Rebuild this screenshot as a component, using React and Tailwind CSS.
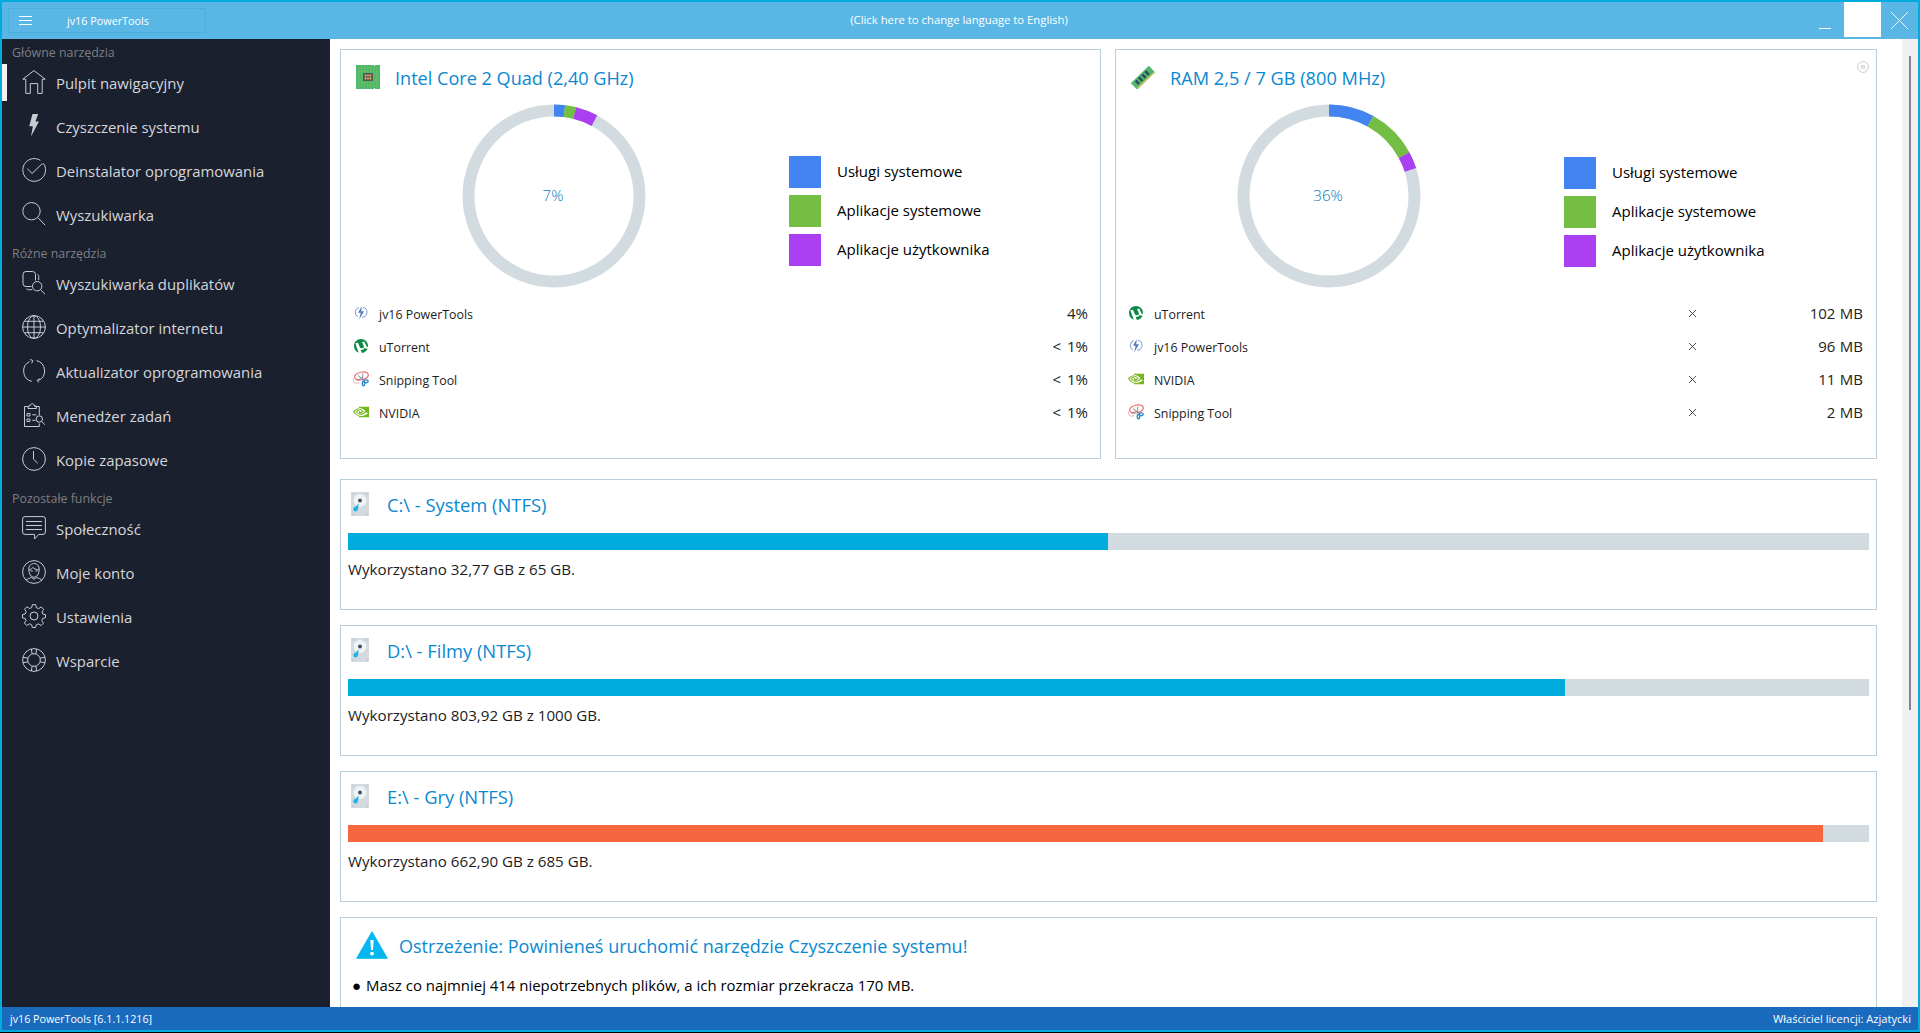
import React from 'react';
import { SiNvidia, SiUtorrent } from 'react-icons/si';

const COLORS = {
  system: '#4285F1',
  systemApps: '#74BF43',
  userApps: '#A93FF0',
};

// Sidebar icons, all drawn on a 24x24 grid
const icons = {
  home: <path d="M.8 9.2 12 .6l11.2 8.600h-3v14.200h-4.500V13.600H8.300v9.800H3.800V9.200z" />,
  bolt: <path fill="currentColor" stroke="none" d="M10.500 0h5.600l-2.600 7.600h3.500L9 22.500l1.900-10.200H7.200z" />,
  check: (
    <>
      <path d="M18.300 2.300A11.400 11.400 0 1 0 22.900 8" />
      <path d="m5.300 10.800 4.800 4.600L19.200 6.600c1.500-1.300 3.300-1 3.700 1.400" />
    </>
  ),
  search: (
    <>
      <circle cx="9.500" cy="9.200" r="8.700" />
      <path d="m15.800 15.500 7.400 7.700" />
    </>
  ),
  duplicates: (
    <>
      <path d="M9.500 15.500H4a3 3 0 0 1-3-3v-9a3 3 0 0 1 3-3h6.500a3 3 0 0 1 3 3v6" />
      <path d="M15.500 3.500c1 .2 1.200 1 1.200 2v3.500M4.500 17.500c.3 1.200 1 1.200 2 1.200h3.800" />
      <circle cx="15.200" cy="15.200" r="4.700" />
      <path d="m18.600 18.800 4.400 4.400" />
    </>
  ),
  globe: (
    <>
      <circle cx="12" cy="12" r="11.400" />
      <ellipse cx="12" cy="12" rx="6.500" ry="11.400" />
      <path d="M12 .5v23M.6 12h22.800M2.600 6.300h18.800M2.600 17.700h18.800" />
    </>
  ),
  refresh: (
    <>
      <path d="M14.500 1.600a10.600 10.600 0 0 1 2 19.900" />
      <path d="M9.800 22.400A10.600 10.600 0 0 1 7.500 2.600" />
      <path d="M8 .5 10.800 1.500 9.700 4.300M16.700 23.500l-1.500-2.200 2.600-1.500" />
    </>
  ),
  tasks: (
    <>
      <path d="M5.500 3.500H2.500v20h14.800v-3M12.500 3.500h4.800v8.500" />
      <path d="M6 5.500V3h2c.2-3 4.200-3 4.400 0h2v2.500zM5 10.500h3v2.500H5zM5 16h3v2.500H5zM10.300 11.800h4M10.300 17.300h3.200" />
      <circle cx="17.300" cy="16" r="3.200" />
      <path d="m19.700 18.500 3.200 3.200" />
    </>
  ),
  clock: (
    <>
      <circle cx="12" cy="12" r="11.400" />
      <path d="M11.500 4v8.200l4.200 4" />
    </>
  ),
  chat: (
    <>
      <path d="M3 .6h18A2.400 2.400 0 0 1 23.400 3v13a2.400 2.400 0 0 1-2.400 2.400h-4.200L12.600 23v-4.600H3A2.400 2.400 0 0 1 .6 16V3A2.400 2.400 0 0 1 3 .6z" />
      <path d="M4 5.500h16M4 9.500h16M4 13.500h16" />
    </>
  ),
  account: (
    <>
      <circle cx="12" cy="12" r="11.400" />
      <path d="M6.800 9.500C6.500 1.500 17.600 1.500 17.200 9.500c-.1 4.500-2.200 7.700-5.200 7.700s-5.100-3.200-5.200-7.700z" />
      <path d="M6.900 9.800c2-.2 3-1 3.800-2.300 1.800 1.500 4 2.200 6.400 2.300M8.500 11h2.300M13.300 11h2.300M4 20.300c1.300-1.600 3.500-2 5.500-2.900l2.500 2 2.500-2c2 .9 4.200 1.300 5.500 2.900" />
    </>
  ),
  gear: (
    <>
      <circle cx="12" cy="12" r="4" />
      <path d="M10.300 .7h3.400l.7 3 2.200.9 2.700-1.700 2.300 2.400-1.600 2.700.8 2.100 2.700.5v3.100l-2.800.7-.9 2.200 1.600 2.600-2.300 2.300-2.700-1.600-2.100.9-.7 2.700h-3.200l-.8-2.800-2.200-.9-2.600 1.700-2.400-2.400L4 16.600l-.8-2.100-2.700-.6v-3.300l2.800-.7.9-2.200-1.600-2.600 2.300-2.300 2.600 1.700 2.200-.9z" strokeLinejoin="round" />
    </>
  ),
  lifebuoy: (
    <>
      <circle cx="12" cy="12" r="11.400" />
      <circle cx="12" cy="12" r="6.300" />
      <path d="M9.300 1l.9 5M14.700 1l-.9 5M9.300 23l.9-5M14.700 23l-.9-5M1 9.300l5 .9M1 14.700l5-.9M23 9.300l-5 .9M23 14.700l-5-.9" />
    </>
  ),
};

const menu = [
  {
    title: 'Główne narzędzia',
    items: [
      { icon: 'home', label: 'Pulpit nawigacyjny', active: true },
      { icon: 'bolt', label: 'Czyszczenie systemu' },
      { icon: 'check', label: 'Deinstalator oprogramowania' },
      { icon: 'search', label: 'Wyszukiwarka' },
    ],
  },
  {
    title: 'Różne narzędzia',
    items: [
      { icon: 'duplicates', label: 'Wyszukiwarka duplikatów' },
      { icon: 'globe', label: 'Optymalizator internetu' },
      { icon: 'refresh', label: 'Aktualizator oprogramowania' },
      { icon: 'tasks', label: 'Menedżer zadań' },
      { icon: 'clock', label: 'Kopie zapasowe' },
    ],
  },
  {
    title: 'Pozostałe funkcje',
    items: [
      { icon: 'chat', label: 'Społeczność' },
      { icon: 'account', label: 'Moje konto' },
      { icon: 'gear', label: 'Ustawienia' },
      { icon: 'lifebuoy', label: 'Wsparcie' },
    ],
  },
];

const cpuApps = [
  { app: 'jv16', name: 'jv16 PowerTools', value: '4%' },
  { app: 'utorrent', name: 'uTorrent', value: '< 1%' },
  { app: 'snipping', name: 'Snipping Tool', value: '< 1%' },
  { app: 'nvidia', name: 'NVIDIA', value: '< 1%' },
];

const ramApps = [
  { app: 'utorrent', name: 'uTorrent', value: '102 MB' },
  { app: 'jv16', name: 'jv16 PowerTools', value: '96 MB' },
  { app: 'nvidia', name: 'NVIDIA', value: '11 MB' },
  { app: 'snipping', name: 'Snipping Tool', value: '2 MB' },
];

const disks = [
  { name: 'C:\\ - System (NTFS)', usage: 'Wykorzystano 32,77 GB z 65 GB.', percent: 49.95, bar: 'bg-[#00ABDE]' },
  { name: 'D:\\ - Filmy (NTFS)', usage: 'Wykorzystano 803,92 GB z 1000 GB.', percent: 80, bar: 'bg-[#00ABDE]' },
  { name: 'E:\\ - Gry (NTFS)', usage: 'Wykorzystano 662,90 GB z 685 GB.', percent: 97, bar: 'bg-[#F6663F]' },
];

function AppIcon({ app }) {
  if (app === 'utorrent') return <SiUtorrent className="w-3.5 h-3.5 text-[#0A8A45]" />;
  if (app === 'nvidia') return <SiNvidia className="w-4 h-4 text-[#76B51B]" />;
  if (app === 'jv16') {
    return (
      <svg className="w-3.5 h-3.5" viewBox="0 0 14 14" fill="none" stroke="#7F9AD0">
        <path d="M5 1.500a5 5 0 0 0-1 9.300M9 1.300a5 5 0 0 1-1 9.900" />
        <path d="M7.800 0 4 6.800h2.700L5.200 13.500 10 5.300H7.200z" fill="#5478C0" stroke="none" />
      </svg>
    );
  }
  return (
    <svg className="w-4 h-4" viewBox="0 0 16 16" fill="none">
      <ellipse cx="8.500" cy="5" rx="7" ry="3.900" stroke="#F07070" strokeWidth="1.200" transform="rotate(-14 8.500 5)" />
      <path d="M1.500 6.500C-.5 9 .5 12 3.500 12.300L6 11.500" stroke="#F3A5A0" />
      <path d="m5 4.500 6 4.500M9.800 2.500 9.500 9M3.500 9l5-1.500" stroke="#7b818c" strokeWidth=".9" />
      <ellipse cx="10.500" cy="12.500" rx="1.200" ry="2.300" stroke="#2E8BC9" strokeWidth="1.400" />
      <ellipse cx="13.200" cy="10.300" rx="2" ry="1.400" stroke="#2E8BC9" strokeWidth="1.400" />
    </svg>
  );
}

function CpuIcon() {
  return (
    <svg className="w-6 h-6" viewBox="0 0 24 24">
      <path d="M0 0h18v1h1V0h5v24h-5v-1h-1v1H0z" fill="#4DB96C" />
      <path
        d="M2.500 2v20M5.500 2v20M8.500 2v20M11.500 2v20M14.500 2v20M17.500 2v20M21 2v20M2 3h20M2 6h20M2 9h20M2 12h20M2 15h20M2 18h20M2 21h20"
        stroke="#8CBD5C"
        strokeWidth=".7"
        strokeDasharray="1.500 1.500"
      />
      <rect x="7" y="8" width="10" height="8" fill="#5C5550" />
      <path d="M9.500 9v6M12 9v6M14.500 9v6M8.500 10.500h7M8.500 13.500h7" stroke="#C8A068" strokeWidth=".9" />
    </svg>
  );
}

function RamIcon() {
  return (
    <svg className="w-6 h-6" viewBox="0 0 24 24">
      <g transform="rotate(-44 12 12)">
        <rect x="-1" y="8" width="25" height="9" fill="#4DB96C" />
        <rect x="0" y="15.500" width="23" height="1.500" fill="#C9C25A" />
        <path d="M3 9.500h2.500v5H3zM7.500 9.500H10v5H7.500zM12 9.500h2.500v5H12zM16.500 9.500H19v5h-2.500z" fill="#34495E" />
      </g>
    </svg>
  );
}

function DiskIcon() {
  return (
    <svg className="w-[18px] h-6" viewBox="0 0 18 24">
      <rect width="18" height="24" fill="#D2DADF" />
      <g fill="#B5C0C7">
        <circle cx="1.800" cy="1.800" r=".8" />
        <circle cx="16.200" cy="1.800" r=".8" />
        <circle cx="1.800" cy="22.200" r=".8" />
        <circle cx="16.200" cy="22.200" r=".8" />
      </g>
      <circle cx="9" cy="8.500" r="6.500" fill="#F0F2F3" />
      <circle cx="9" cy="8.500" r="1.900" fill="#3E4F60" />
      <path d="M7.800 11.500 6.800 17.500c-.5 2.600-4.300 2.400-4.500 0 0-1.300.8-2.200 2-2.500z" fill="#12B5EA" />
      <circle cx="4.600" cy="17.300" r=".7" fill="#7A99A8" />
    </svg>
  );
}

function Donut({ percent, segments }) {
  const r = 85.5;
  const point = (deg) => {
    const a = ((deg - 90) * Math.PI) / 180;
    return `${92 + r * Math.cos(a)} ${92 + r * Math.sin(a)}`;
  };

  return (
    <div className="relative w-[184px] h-[184px] shrink-0">
      <svg className="w-full h-full" viewBox="0 0 184 184" fill="none" strokeWidth="12">
        <circle cx="92" cy="92" r={r} stroke="#D2DBE0" />
        {segments.map((s) => (
          <path key={s.color} d={`M${point(s.from)}A${r} ${r} 0 0 1 ${point(s.to)}`} stroke={s.color} />
        ))}
      </svg>
      <span className="absolute inset-0 flex items-center justify-center pr-[2px] pb-[2px] text-[15.100px] font-light text-[#0A7DB8]">
        {percent}
      </span>
    </div>
  );
}

function Legend() {
  return (
    <ul className="flex flex-col gap-[7px] ml-[143px] text-[15px] text-black">
      <li className="flex items-center gap-4">
        <span className="w-8 h-8 bg-[#4285F1]" />
        <span className="pb-0.5">Usługi systemowe</span>
      </li>
      <li className="flex items-center gap-4">
        <span className="w-8 h-8 bg-[#74BF43]" />
        <span className="pb-0.5">Aplikacje systemowe</span>
      </li>
      <li className="flex items-center gap-4">
        <span className="w-8 h-8 bg-[#A93FF0]" />
        <span className="pb-0.5">Aplikacje użytkownika</span>
      </li>
    </ul>
  );
}

function AppRow({ row, closable }) {
  return (
    <li className="flex items-center h-[33px]">
      <span className="w-4 mr-[10px] mb-[2px] flex justify-center">
        <AppIcon app={row.app} />
      </span>
      <span className="pt-[3px] text-[12.400px] text-[#1c1c1c]">{row.name}</span>
      {closable && (
        <svg className="w-[7px] h-[7px] ml-auto mr-[43px] mb-px" viewBox="0 0 7 7" stroke="#333a45" strokeWidth=".9">
          <path d="M0 0l7 7M7 0 0 7" />
        </svg>
      )}
      <span className={`text-[15px] text-[#222] text-right ${closable ? 'w-[124px] [word-spacing:.5px]' : 'ml-auto [word-spacing:2px]'}`}>
        {row.value}
      </span>
    </li>
  );
}

function Sidebar() {
  return (
    <nav className="w-[328px] shrink-0 bg-[#1B202E]">
      {menu.map((group, i) => (
        <div key={group.title}>
          <h3 className={`flex items-end pl-[10px] text-[12.400px] leading-4 text-[#7D7F82] ${i === 0 ? 'h-[22px]' : 'h-[25px]'}`}>
            {group.title}
          </h3>
          {group.items.map((item) => (
            <a key={item.label} className="relative flex items-center h-11 pl-5 text-[#C9CCD3]">
              {item.active && <span className="absolute left-0 top-[3px] w-[5px] h-[37px] bg-[#F2F2F2]" />}
              <svg className="w-6 h-6 mb-[2px]" viewBox="0 0 24 24" fill="none" stroke="currentColor" strokeWidth="1">
                {icons[item.icon]}
              </svg>
              <span className="ml-[10px] text-[14.900px] text-[#D5D6DA]">{item.label}</span>
            </a>
          ))}
        </div>
      ))}
    </nav>
  );
}

export default function App() {
  return (
    <div className="w-[1920px] h-[1033px] bg-black overflow-hidden font-['Open_Sans','Segoe_UI',sans-serif]">
      <div className="flex flex-col h-[1032px] border-2 border-[#00ABDE]">
        <header className="relative flex items-center h-[37px] shrink-0 bg-[#5AB7E5] text-white">
          <div className="flex items-center w-[198px] h-[25px] ml-1.5 pl-[10px] border border-[#48AFDF]">
            <svg className="w-[13px] h-[9px]" viewBox="0 0 13 9" stroke="white">
              <path d="M0 .5h13M0 4.500h13M0 8.500h13" />
            </svg>
            <span className="ml-[35px] pt-0.5 text-[10.800px]">jv16 PowerTools</span>
          </div>
          <span className="absolute left-0 w-full pr-[2px] text-center text-[11.300px]">(Click here to change language to English)</span>
          <div className="flex ml-auto h-full">
            <button className="w-[37px] mr-px flex justify-center items-end pb-[10px]">
              <span className="w-3 h-px bg-white" />
            </button>
            <button className="w-[37px] h-[35px] bg-white" />
            <button className="w-[37px] flex justify-center items-center">
              <svg className="w-[17px] h-[17px]" viewBox="0 0 17 17" stroke="white" strokeWidth=".9">
                <path d="M0 0l17 17M17 0 0 17" />
              </svg>
            </button>
          </div>
        </header>

        <div className="flex flex-1 min-h-0">
          <Sidebar />

          <main className="flex-1 pl-[10px] pt-[10px] pr-[25px] bg-white overflow-hidden">
            <div className="flex gap-[14px]">
              <section className="w-[761px] h-[410px] border border-[#B9CDDB]">
                <div className="flex items-center h-[54px] pl-[15px]">
                  <CpuIcon />
                  <h2 className="ml-[15px] pt-0.5 leading-7 text-[18.100px] text-[#0A88D0]">Intel Core 2 Quad (2,40 GHz)</h2>
                </div>
                <div className="flex items-start pl-[121px]">
                  <Donut
                    percent="7%"
                    segments={[
                      { color: COLORS.system, from: 0, to: 7 },
                      { color: COLORS.systemApps, from: 7, to: 14 },
                      { color: COLORS.userApps, from: 14, to: 28.2 },
                    ]}
                  />
                  <div className="pt-[52px]">
                    <Legend />
                  </div>
                </div>
                <ul className="mt-[9px] pl-3 pr-3">
                  {cpuApps.map((row) => (
                    <AppRow key={row.name} row={row} />
                  ))}
                </ul>
              </section>

              <section className="relative w-[762px] h-[410px] border border-[#B9CDDB]">
                <svg className="absolute top-[11px] right-[7px] w-3 h-3" viewBox="0 0 12 12" fill="none" stroke="#CDCDCD">
                  <circle cx="6" cy="6" r="5.400" />
                  <path d="M4.900 4v4M7.100 4v4" strokeWidth="1.400" />
                </svg>
                <div className="flex items-center h-[54px] pl-[15px]">
                  <RamIcon />
                  <h2 className="ml-[15px] pt-0.5 leading-7 text-[18.200px] text-[#0A88D0]">RAM 2,5 / 7 GB (800 MHz)</h2>
                </div>
                <div className="flex items-start pl-[121px]">
                  <Donut
                    percent="36%"
                    segments={[
                      { color: COLORS.system, from: 0, to: 29 },
                      { color: COLORS.systemApps, from: 29, to: 61.4 },
                      { color: COLORS.userApps, from: 61.4, to: 72.2 },
                    ]}
                  />
                  <div className="pt-[53px]">
                    <Legend />
                  </div>
                </div>
                <ul className="mt-[9px] pl-3 pr-[13px]">
                  {ramApps.map((row) => (
                    <AppRow key={row.name} row={row} closable />
                  ))}
                </ul>
              </section>
            </div>

            <div className="flex flex-col gap-[15px] mt-5 w-[1537px]">
              {disks.map((disk) => (
                <section key={disk.name} className="h-[131px] px-[7px] border border-[#B9CDDB]">
                  <div className="flex items-center h-[53px] pl-[3px] pb-1.5">
                    <DiskIcon />
                    <h2 className="ml-[18px] pt-0.5 leading-7 text-[18.350px] text-[#0A88D0]">{disk.name}</h2>
                  </div>
                  <div className="h-[17px] bg-[#D2DBE0]">
                    <div className={`h-full ${disk.bar}`} style={{ width: `${disk.percent}%` }} />
                  </div>
                  <p className="mt-2 text-[15.150px] text-[#1c1c1c]">{disk.usage}</p>
                </section>
              ))}

              <section className="h-[131px] shrink-0 border border-[#B9CDDB]">
                <div className="flex items-center h-[54px] pl-[15px]">
                  <svg className="w-8 h-7" viewBox="0 0 32 28">
                    <path d="M16 .8 31.300 27.300H.7z" fill="#04B7F0" stroke="#04B7F0" strokeLinejoin="round" />
                    <path d="M14.300 9h3.400l-.7 10h-2z" fill="white" />
                    <circle cx="16" cy="22.600" r="1.900" fill="white" />
                  </svg>
                  <h2 className="ml-[11px] pt-0.5 leading-7 text-[18.050px] text-[#0A88D0]">
                    Ostrzeżenie: Powinieneś uruchomić narzędzie Czyszczenie systemu!
                  </h2>
                </div>
                <p className="flex items-center mt-0.5 pl-[11px] text-[14.950px] text-black">
                  <span className="w-[14px]">●</span>
                  Masz co najmniej 414 niepotrzebnych plików, a ich rozmiar przekracza 170 MB.
                </p>
              </section>
            </div>
          </main>

          <div className="w-4 shrink-0 pt-[17px] pl-[7px] bg-[#F0F0F0]">
            <div className="w-0.5 h-[654px] bg-[#858585]" />
          </div>
        </div>

        <footer className="flex items-center justify-between h-[23px] shrink-0 pt-0.5 pl-2 pr-[7px] bg-[#1A6BBE] text-white">
          <span className="text-[10.700px]">jv16 PowerTools [6.1.1.1216]</span>
          <span className="text-[11.100px]">Właściciel licencji: Azjatycki</span>
        </footer>
      </div>
    </div>
  );
}
